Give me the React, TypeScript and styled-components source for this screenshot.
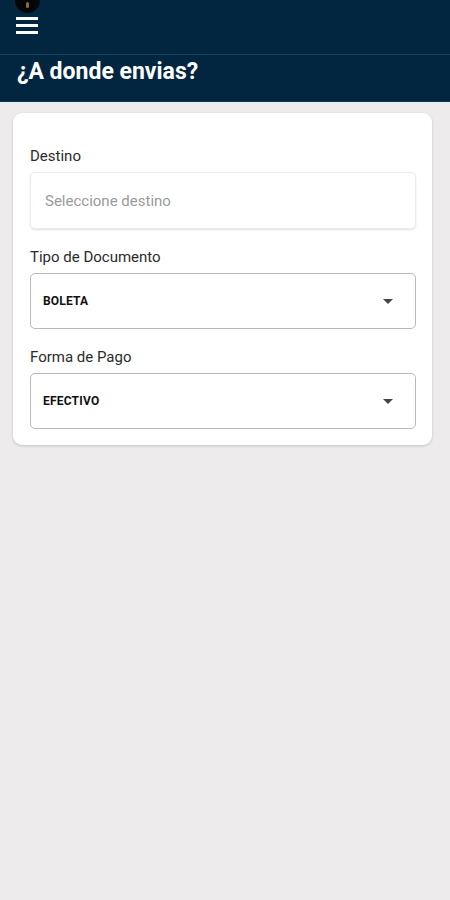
import React from "react";
import styled, { createGlobalStyle } from "styled-components";

const GlobalStyle = createGlobalStyle`
  html, body {
    margin: 0;
    padding: 0;
    background: #edebec;
    font-family: Roboto, "Liberation Sans", Arial, sans-serif;
  }
`;

const Page = styled.div`
  width: 450px;
  min-height: 900px;
  background: #edebec;
`;

const Header = styled.header`
  background: #032640;
  border-bottom: 1px solid #123a55;
`;

const TopBar = styled.div`
  position: relative;
  height: 54px;
  display: flex;
  align-items: center;
  padding: 0 16px;
  border-bottom: 1px solid #17405c;
`;

const Camera = styled.div`
  position: absolute;
  left: 15px;
  top: -12px;
  width: 25px;
  height: 25px;
  border-radius: 50%;
  background: #050607;
  display: flex;
  align-items: center;
  justify-content: center;

  &::after {
    content: "";
    width: 3px;
    height: 6px;
    margin-top: 8px;
    border-radius: 2px;
    background: #8a6a3a;
  }
`;

const MenuButton = styled.button`
  border: none;
  background: none;
  padding: 0;
  margin-top: -4px;
  display: flex;
  flex-direction: column;
  gap: 4px;
  cursor: pointer;
`;

const MenuLine = styled.span`
  display: block;
  width: 22px;
  height: 3px;
  background: #fff;
`;

const Title = styled.h1`
  margin: 0;
  padding: 3px 17px 15px;
  color: #fff;
  font-size: 23px;
  font-weight: 700;
  line-height: 28px;
`;

const Content = styled.main`
  padding: 11px 18px 0 13px;
`;

const Card = styled.section`
  background: #fff;
  border-radius: 9px;
  box-shadow: 0 1px 3px rgba(0, 0, 0, 0.18);
  padding: 34px 16px 16px 17px;
  display: flex;
  flex-direction: column;
`;

const Label = styled.label`
  font-size: 15px;
  color: #2b2b2b;
  line-height: 18px;
  margin-bottom: 7px;
`;

const Field = styled.div<{ $plain?: boolean }>`
  height: ${(p) => (p.$plain ? "57px" : "56px")};
  box-sizing: border-box;
  border: 1px solid ${(p) => (p.$plain ? "#ececec" : "#b9b9b9")};
  border-radius: 5px;
  box-shadow: ${(p) => (p.$plain ? "0 1px 2px rgba(0,0,0,0.12)" : "none")};
  display: flex;
  align-items: center;
  justify-content: space-between;
  padding: 0 22px 0 ${(p) => (p.$plain ? "14px" : "12px")};
  margin-bottom: 19px;

  &:last-child {
    margin-bottom: 0;
  }
`;

const Placeholder = styled.span`
  font-size: 15px;
  color: #9a9a9a;
`;

const Value = styled.span`
  font-size: 12px;
  font-weight: 700;
  color: #111;
  letter-spacing: 0.2px;
`;

const Caret = styled.span`
  width: 0;
  height: 0;
  border-left: 5px solid transparent;
  border-right: 5px solid transparent;
  border-top: 5px solid #444;
`;

const App: React.FC = () => {
  return (
    <Page>
      <GlobalStyle />
      <Header>
        <TopBar>
          <Camera />
          <MenuButton aria-label="menu">
            <MenuLine />
            <MenuLine />
            <MenuLine />
          </MenuButton>
        </TopBar>
        <Title>¿A donde envias?</Title>
      </Header>
      <Content>
        <Card>
          <Label>Destino</Label>
          <Field $plain>
            <Placeholder>Seleccione destino</Placeholder>
          </Field>
          <Label>Tipo de Documento</Label>
          <Field>
            <Value>BOLETA</Value>
            <Caret />
          </Field>
          <Label>Forma de Pago</Label>
          <Field>
            <Value>EFECTIVO</Value>
            <Caret />
          </Field>
        </Card>
      </Content>
    </Page>
  );
};

export default App;
